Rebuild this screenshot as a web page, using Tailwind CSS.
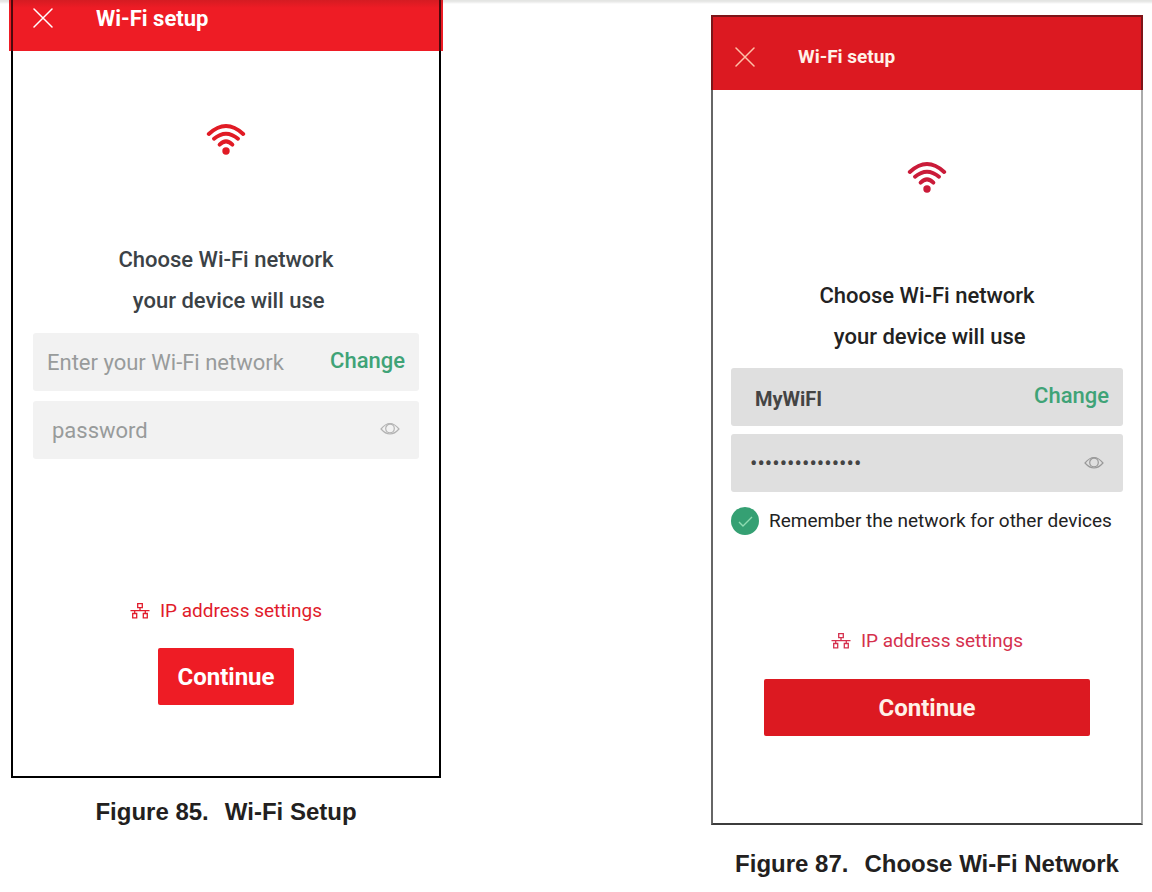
<!DOCTYPE html>
<html lang="en">
<head>
  <meta charset="UTF-8" />
  <meta name="viewport" content="width=device-width, initial-scale=1.0" />
  <title>Wi-Fi setup</title>
  <script src="https://cdn.jsdelivr.net/npm/@tailwindcss/browser@4"></script>
</head>
<body class="min-h-screen bg-white bg-[linear-gradient(#e4e5e3_1px,#ececeb_2px,#fff_4px)] font-[Roboto,sans-serif]">
  <!-- shared icons -->
  <svg class="hidden">
    <symbol id="close" viewBox="0 0 20 20">
      <path d="M1 1L19 19M19 1L1 19" fill="none" stroke="currentColor" stroke-width="1.5" stroke-linecap="round" />
    </symbol>
    <symbol id="wifi" viewBox="0 0 40 32">
      <g fill="none" stroke="currentColor" stroke-width="3.9" stroke-linecap="round">
        <path d="M2.8 11Q20 -5 37.2 11" />
        <path d="M8 15.8Q20 5.600 32 15.8" />
        <path d="M13.6 21.6Q20 15.200 26.4 21.6" />
      </g>
      <circle cx="20" cy="28" r="3.7" fill="currentColor" />
    </symbol>
    <symbol id="eye" viewBox="0 0 20 14">
      <g fill="none" stroke="currentColor" stroke-width="1.2" stroke-linejoin="round">
        <path d="M1 7Q10 -4 19 7Q10 17 1 7Z" />
        <circle cx="10" cy="6.5" r="4.3" />
      </g>
    </symbol>
    <symbol id="lan" viewBox="0 0 20 18">
      <g fill="none" stroke="currentColor" stroke-width="1.3">
        <path d="M7.7 1.7h4.6v4h-4.6zM2.7 11.5h4v4.3h-4zM13.3 11.5h4v4.3h-4zM10 5.7v3M.5 8.7h19M4.7 8.7v2.8M15.3 8.7v2.8" />
      </g>
    </symbol>
  </svg>

  <main class="grid grid-cols-[434fr_268fr_432fr] items-start pr-[9px] pl-[9px]">
    <!-- empty form -->
    <figure>
      <header class="bg-[linear-gradient(#d51b22,#ee1c25_8px)] px-[2px]">
        <div class="flex h-[51px] items-start border-x-2 border-[#4d090c] pt-[3px] pl-5 text-white">
          <button class="flex h-[30px] items-center" aria-label="Close"><svg class="size-5"><use href="#close" /></svg></button>
          <h1 class="ml-[43px] text-[22px] leading-[32px] font-bold">Wi-Fi setup</h1>
        </div>
      </header>
      <form class="mx-[2px] flex flex-col border-x-2 border-b-2 border-black px-5 pt-[72px] pb-[71px]">
        <svg class="h-8 w-10 self-center text-[#e11b25]"><use href="#wifi" /></svg>
        <h2 class="mt-[84px] text-center text-[22px] leading-[41px] font-medium text-[#3b4246]">Choose Wi-Fi network<br />&nbsp;your device will use</h2>
        <div class="mt-3 flex h-[58px] items-center rounded-[3px] bg-[#f2f2f2] px-[14px]">
          <input type="text" aria-label="Wi-Fi network" placeholder="Enter your Wi-Fi network" class="min-w-0 flex-1 text-[22px] placeholder:text-[#989b9b] focus:outline-none" />
          <button type="button" class="pb-1 text-[22px] font-medium text-[#3fa377]">Change</button>
        </div>
        <div class="mt-[10px] flex h-[58px] items-center rounded-[3px] bg-[#f2f2f2] px-[19px]">
          <input type="password" aria-label="Password" placeholder="password" class="min-w-0 flex-1 text-[22px] placeholder:text-[#989b9b] focus:outline-none" />
          <button type="button" aria-label="Show password" class="pb-[2px] text-[#b3b3b3]"><svg class="h-[14px] w-5"><use href="#eye" /></svg></button>
        </div>
        <a href="#" class="mt-[138px] flex items-center gap-[10px] self-center text-[19px] leading-[28px] text-[#e11b2b]">
          <svg class="h-[18px] w-5"><use href="#lan" /></svg>IP address settings
        </a>
        <button class="mt-[23px] h-[57px] self-center rounded-[2px] bg-[#ee1c25] px-[19px] text-[24px] font-bold text-white">Continue</button>
      </form>
      <figcaption class="mt-[18px] flex justify-center gap-4 font-['Liberation_Sans',Arial,sans-serif] text-[24px] leading-[32px] font-bold text-[#231f20]"><span>Figure 85.</span><span>Wi-Fi Setup</span></figcaption>
    </figure>

    <!-- filled form -->
    <figure class="col-start-3 mt-[15px]">
      <header class="flex h-[75px] items-center border-2 border-b-0 border-[#7d1519] bg-[#dc1921] pt-[6px] pl-[22px] text-[#fff1e8]">
        <button class="flex items-center text-[#ffc0a8]" aria-label="Close"><svg class="size-5"><use href="#close" /></svg></button>
        <h1 class="ml-[43px] text-[19px] leading-[32px] font-bold">Wi-Fi setup</h1>
      </header>
      <form class="flex flex-col border-x-2 border-b-2 border-r-[#aaaaaa] border-b-[#3c3c3c] border-l-[#666666] px-[18px] pt-[71px] pb-[87px]">
        <svg class="h-8 w-10 self-center text-[#ca1b39]"><use href="#wifi" /></svg>
        <h2 class="mt-[82px] text-center text-[22px] leading-[41px] font-medium text-[#222222]">Choose Wi-Fi network<br />&nbsp;your device will use</h2>
        <div class="mt-[11px] flex h-[58px] items-center rounded-[3px] bg-[#dfdfdf] pr-[14px] pl-6">
          <input type="text" aria-label="Wi-Fi network" value="MyWiFI" class="min-w-0 flex-1 pt-[3px] text-[20px] font-bold text-[#444444] focus:outline-none" />
          <button type="button" class="pb-1 text-[22px] font-medium text-[#3fa377]">Change</button>
        </div>
        <div class="mt-2 flex h-[58px] items-center rounded-[3px] bg-[#dfdfdf] px-[19px]">
          <input type="password" aria-label="Password" value="mywifipassword1" class="min-w-0 flex-1 text-[22px] text-[#444444] focus:outline-none" />
          <button type="button" aria-label="Show password" class="text-[#999999]"><svg class="h-[14px] w-5"><use href="#eye" /></svg></button>
        </div>
        <label class="mt-[14px] flex items-center gap-[10px] text-[19px] leading-[29px] whitespace-nowrap text-[#222222]">
          <span class="relative size-7 shrink-0">
            <input type="checkbox" checked class="block size-7 appearance-none rounded-full bg-[#bbbbbb] checked:bg-[#35a073]" />
            <svg class="pointer-events-none absolute inset-0 size-7" viewBox="0 0 28 28"><path d="M8 15l4 4 9-9" fill="none" stroke="#8fdcb2" stroke-width="1.4" /></svg>
          </span>
          Remember the network for other devices
        </label>
        <a href="#" class="mt-[92px] flex items-center gap-[10px] self-center text-[19px] leading-[28px] text-[#d5304d]">
          <svg class="h-[18px] w-5"><use href="#lan" /></svg>IP address settings
        </a>
        <button class="mx-[33px] mt-6 h-[57px] rounded-[2px] bg-[#dc1921] text-[24px] font-bold text-[#fff1e8]">Continue</button>
      </form>
      <figcaption class="mt-[23px] flex justify-center gap-4 font-['Liberation_Sans',Arial,sans-serif] text-[24px] leading-[32px] font-bold text-[#231f20]"><span>Figure 87.</span><span>Choose Wi-Fi Network</span></figcaption>
    </figure>
  </main>
</body>
</html>
